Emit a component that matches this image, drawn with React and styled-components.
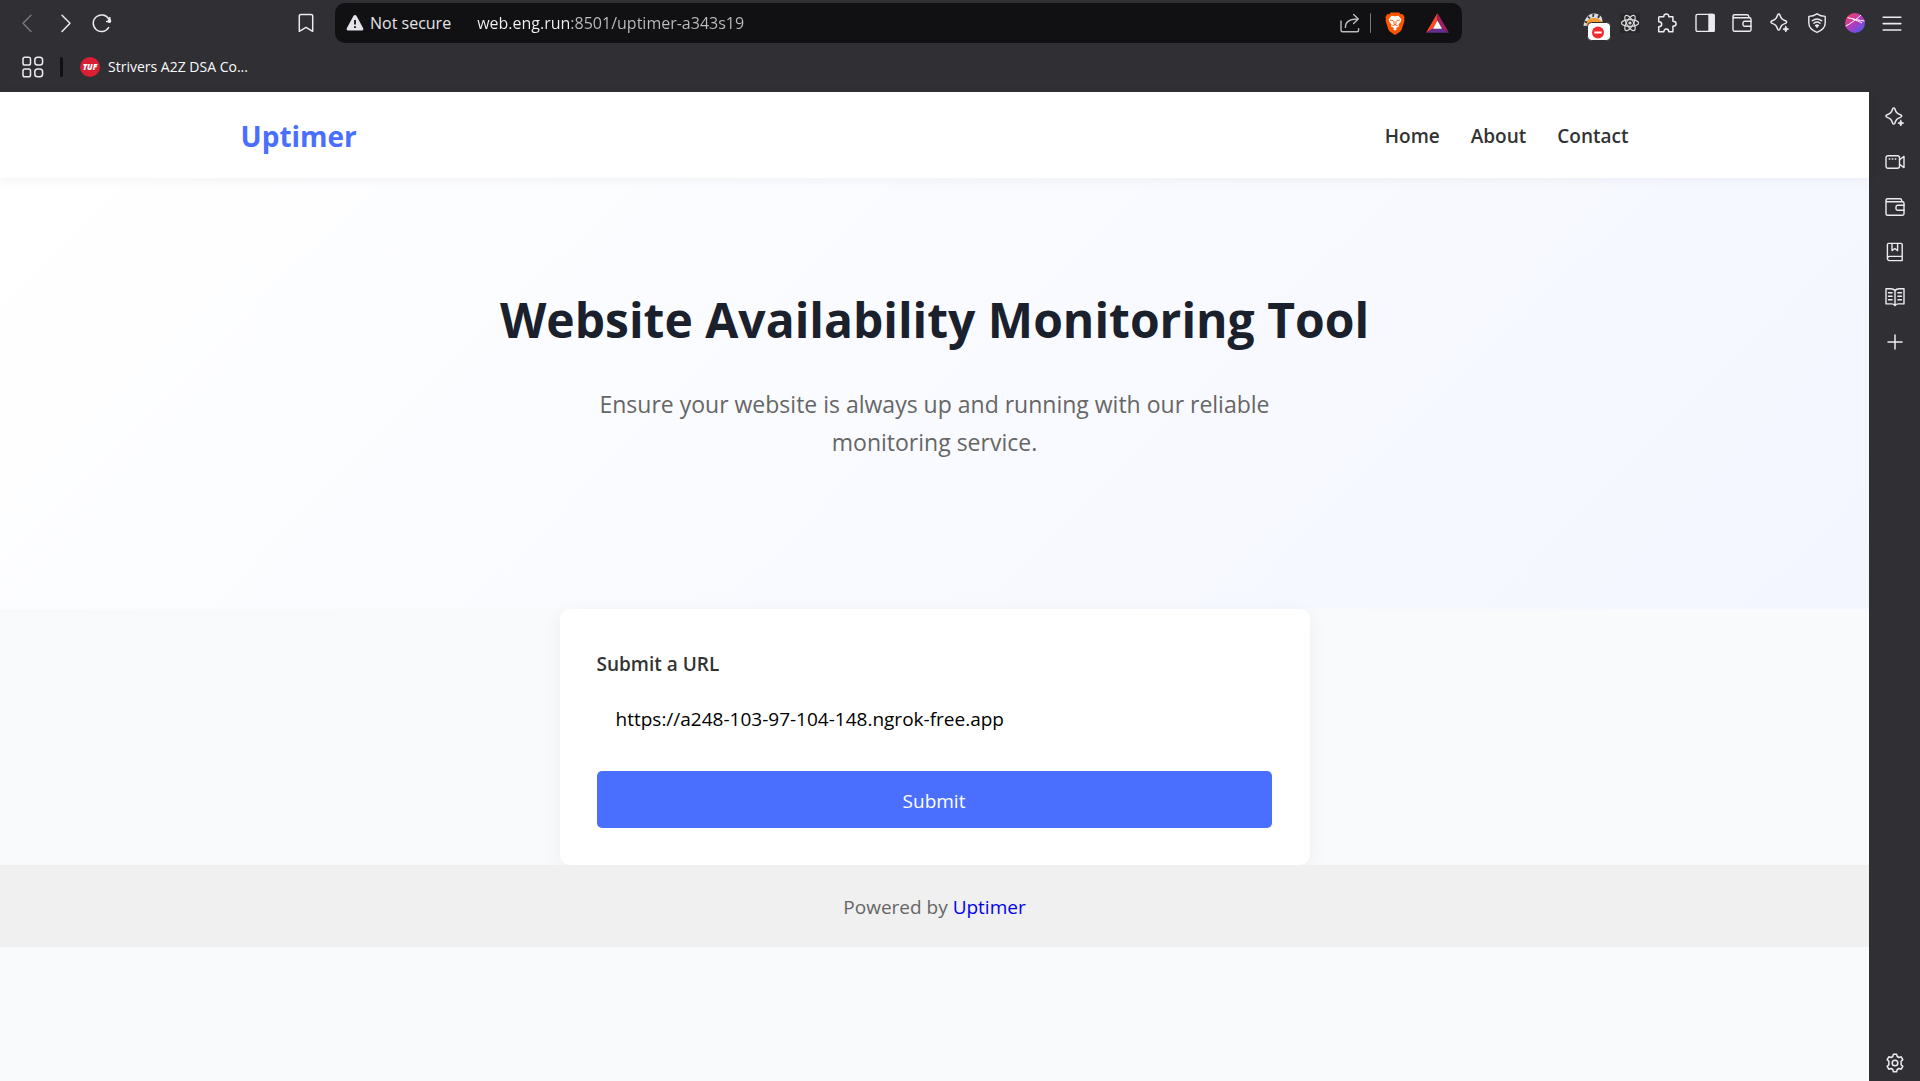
import React, { useState } from "react";
import styled, { createGlobalStyle } from "styled-components";

const GlobalStyle = createGlobalStyle`
  *, *::before, *::after { box-sizing: border-box; }
  body {
    margin: 0;
    font-family: "Open Sans", "Noto Sans", sans-serif;
    background: #f8fafc;
  }
`;

const CHROME = "#302f34";

/* ---------- browser frame ---------- */

const Browser = styled.div`
  display: flex;
  flex-direction: column;
  min-height: 100vh;
`;

const Chrome = styled.div`
  height: 92px;
  flex: none;
  background: ${CHROME};
  color: #f0f0f4;
`;

const Toolbar = styled.div`
  display: grid;
  grid-template-columns: 335px minmax(0, 1127px) 1fr;
  height: 46px;
  align-items: center;
`;

const NavButtons = styled.div`
  display: flex;
  align-items: center;
  gap: 17px;
  padding: 0 19px 0 18px;

  & > :last-child { margin-left: auto; }
`;

const IconButton = styled.button`
  display: grid;
  place-items: center;
  flex: none;
  width: ${(p) => p.$size || 20}px;
  height: ${(p) => p.$height || p.$size || 20}px;
  padding: 0;
  border: 0;
  background: none;
  color: ${(p) => (p.$muted ? "#77767c" : "#ececf0")};
  cursor: pointer;

  svg { display: block; }
`;

const AddressBar = styled.div`
  display: flex;
  align-items: center;
  height: 40px;
  padding: 0 13px 0 11px;
  border-radius: 10px;
  background: #111113;
  font-size: 16px;
`;

const SecurityButton = styled.button`
  display: flex;
  align-items: center;
  gap: 6px;
  padding: 0;
  border: 0;
  background: none;
  color: #e4e3ea;
  font: inherit;
  white-space: nowrap;
`;

const AddressInput = styled.input`
  flex: 1;
  min-width: 0;
  margin-left: 26px;
  padding: 0;
  border: 0;
  outline: 0;
  font: inherit;
  color: #c6c6ca;
  background: linear-gradient(to right, #f4f4f6 94px, #bdbdc2 94px);
  background-clip: text;
  -webkit-background-clip: text;
  -webkit-text-fill-color: transparent;
`;

const AddressActions = styled.div`
  display: flex;
  align-items: center;
`;

const BraveActions = styled.div`
  display: flex;
  align-items: center;
  gap: 20px;
`;

const Divider = styled.span`
  width: ${(p) => p.$width}px;
  height: 20px;
  margin: ${(p) => p.$margin};
  border-radius: 2px;
  background: ${(p) => p.$color};
`;

const Extensions = styled.div`
  display: flex;
  align-items: center;
  justify-content: flex-end;
  gap: 9px;
  padding-right: 18px;
`;

const ExtensionRow = styled.div`
  display: flex;
  justify-content: space-between;
  width: 282px;
`;

const BookmarksBar = styled.div`
  display: flex;
  align-items: center;
  height: 42px;
  padding-left: 22px;
`;

const Bookmark = styled.a`
  display: flex;
  align-items: center;
  gap: 8px;
  color: #fafafc;
  font-size: 14px;
  text-decoration: none;

  span { padding-bottom: 2px; }
`;

const Body = styled.div`
  display: flex;
  flex: 1;
`;

const Sidebar = styled.aside`
  display: flex;
  flex-direction: column;
  align-items: center;
  gap: 25px;
  flex: none;
  width: 51px;
  padding: 15px 0 8px 1px;
  background: ${CHROME};

  & > :last-child { margin-top: auto; }
`;

/* ---------- site ---------- */

const Page = styled.div`
  flex: 1;
  min-width: 0;
  background: #f8fafc;
  color: #333;
  font-size: 19px;
`;

const Header = styled.header`
  position: relative;
  z-index: 1;
  background: #fff;
  box-shadow: 0 2px 12px rgba(0, 0, 0, 0.05);
`;

const HeaderInner = styled.div`
  display: flex;
  align-items: center;
  justify-content: space-between;
  max-width: 1500px;
  height: 86px;
  margin: 0 auto;
  padding: 2px 56px 0;
`;

const Logo = styled.a`
  color: #4a6fff;
  font-size: 28px;
  font-weight: 700;
  text-decoration: none;
`;

const Nav = styled.nav`
  display: flex;
  gap: 31px;
`;

const NavLink = styled.a`
  color: #333;
  font-weight: 600;
  text-decoration: none;
`;

const Hero = styled.section`
  padding: 102px 25px 148px;
  background: linear-gradient(135deg, #ffffff 0%, #f3f6ff 100%);
  text-align: center;
`;

const Title = styled.h1`
  margin: 0 0 25px;
  color: #1a202c;
  font-size: 48px;
  font-weight: 700;
  line-height: 80px;
`;

const Lead = styled.p`
  max-width: 750px;
  margin: 0 auto;
  color: #666;
  font-size: 23px;
  line-height: 38px;
`;

const Card = styled.form`
  display: flex;
  flex-direction: column;
  max-width: 750px;
  margin: 0 auto;
  padding: 37px 38px 37px 37px;
  border-radius: 10px;
  background: #fff;
  box-shadow: 0 4px 20px rgba(0, 0, 0, 0.05);
`;

const Label = styled.label`
  margin-bottom: 10px;
  font-weight: 600;
  line-height: 36px;
`;

const UrlInput = styled.input`
  height: 54px;
  margin-bottom: 25px;
  padding: 0 19px;
  border: 0;
  outline: 0;
  border-radius: 5px;
  background: #fff;
  color: #000;
  font: inherit;
`;

const SubmitButton = styled.button`
  height: 57px;
  padding: 2px 0 0;
  border: 0;
  border-radius: 5px;
  background: #4a6fff;
  color: #fff;
  font: inherit;
  cursor: pointer;
`;

const Footer = styled.footer`
  position: relative;
  padding: 26px 25px 24px;
  background: #f0f0f0;
  color: #666;
  line-height: 32px;
  text-align: center;

  a { color: #0000ee; text-decoration: none; }
`;

/* ---------- icons ---------- */

const Icon = ({ size = 20, box = 20, width = 1.5, children }) => (
  <svg width={size} height={size} viewBox={`0 0 ${box} ${box}`} fill="none" stroke="currentColor"
    strokeWidth={width} strokeLinecap="round" strokeLinejoin="round" aria-hidden="true">
    {children}
  </svg>
);

const BackIcon = () => <Icon><path d="M13 2.2 5 10.2 13 18.5" /></Icon>;
const ForwardIcon = () => <Icon><path d="M7 2.2 15 10.2 7 18.5" /></Icon>;
const ReloadIcon = () => (
  <Icon>
    <path d="M16.6 14.6A8.3 8.3 0 1 1 16.8 6.2" />
    <circle cx="17.4" cy="8" r="1.9" fill="currentColor" stroke="none" />
    <path d="M17.8 4.6V8.400H14.600" />
  </Icon>
);
const BookmarkIcon = () => (
  <Icon><path d="M5 1.4h10a1.7 1.7 0 0 1 1.7 1.7v15.2L10 14.4l-6.7 3.9V3.1A1.7 1.7 0 0 1 5 1.4Z" /></Icon>
);
const WarningIcon = () => (
  <svg width="18" height="18" viewBox="0 0 18 18" aria-hidden="true">
    <path d="M7.4 1.9a1.9 1.9 0 0 1 3.2 0l6.5 12a1.7 1.7 0 0 1-1.5 2.6H2.4a1.7 1.7 0 0 1-1.5-2.6Z" fill="#e4e3ea" />
    <path d="M9 6v4.5M9 12.3v1.6" stroke="#111113" strokeWidth="1.8" />
  </svg>
);
const ShareIcon = () => (
  <Icon width={1.4}>
    <g stroke="#bcbcc0">
      <path d="M1 8v9.2c0 .9.6 1.5 1.5 1.5H17c.9 0 1.6-.6 1.6-1.5v-1.6" />
      <path d="M5.4 14.4C5.4 9.6 8.2 6 18 6M13.6 1.6 18.3 6l-4.7 4.4" />
    </g>
  </Icon>
);
const BraveIcon = () => (
  <svg width="20" height="23" viewBox="0 0 20 23" aria-hidden="true">
    <path d="M6 .6h8l1.8 1.7 2-.1L19.6 5l-.5 2 .4 1.5-2.9 9.2-1.700 2.100L10 22.900l-4.900-3.100-1.700-2.100L.5 8.500.9 7 .4 5l1.800-2.800 2 .1Z" fill="#ff5500" />
    <path d="M10 4.200l3.400-.5 3 3.600-.6 2.500-2.300 2.800.5 2-2 .8L10 17.800l-2-2.400-2-.8.5-2-2.300-2.800-.6-2.500 3-3.600Z" fill="#fff" />
    <path d="M4.900 7.900l3.600 1M15.100 7.900l-3.600 1M8.800 9l.5 3.500h1.400l.5-3.500M7.300 13.900l2.700-1.200 2.700 1.200" fill="none" stroke="#ff5500" strokeWidth=".9" />
    <path d="M8.200 17.200 10 16l1.800 1.200L10 18.800Z" fill="#fff" />
  </svg>
);
const BatIcon = () => (
  <svg width="23" height="20" viewBox="0 0 23 20" aria-hidden="true">
    <path d="M11.500 0 0 19.800l7.200-4.200 4.300-7.800Z" fill="#ff4724" />
    <path d="M11.500 0 23 19.800l-7.200-4.200-4.300-7.800Z" fill="#9e1f63" />
    <path d="M0 19.800h23l-7.200-4.200H7.200Z" fill="#662d91" />
    <path d="M11.500 7.600 16 15.700H7Z" fill="#fff" />
  </svg>
);
const BlockedExtensionIcon = () => (
  <svg width="28" height="36" viewBox="0 -8 28 36" aria-hidden="true">
    <path d="M.5 13C1 6 5 .600 11 .400c4 0 6.500 1.600 8 4.600l.6 5L12 12Z" fill="#d9dadd" />
    <path d="M3 9.500C6 4.500 13 3 19 8.500L18 11 4 13Z" fill="#f29a2e" />
    <path d="M5 3.500l2 2M10.500.8l-.5 3M16.500 2l-1.500 3M1.500 8.500l2.500 1" stroke="#302f34" strokeWidth="1.700" />
    <rect x="4.500" y="9.500" width="23" height="18" rx="4" fill="#fff" stroke="#302f34" />
    <circle cx="15" cy="19.500" r="6" fill="#f02c30" />
    <path d="M11.300 19.500h7.400" stroke="#fff" strokeWidth="2" />
  </svg>
);
const ReactIcon = () => (
  <svg width="20" height="20" viewBox="0 0 20 20" fill="none" stroke="#d8d8dc" strokeWidth="1.200" aria-hidden="true">
    <rect width="20" height="20" fill="#28282a" stroke="none" />
    <ellipse cx="10" cy="10" rx="8.600" ry="3.400" />
    <ellipse cx="10" cy="10" rx="8.600" ry="3.400" transform="rotate(60 10 10)" />
    <ellipse cx="10" cy="10" rx="8.600" ry="3.400" transform="rotate(120 10 10)" />
    <circle cx="10" cy="10" r="1.600" fill="#d8d8dc" stroke="none" />
  </svg>
);
const PuzzleIcon = () => (
  <Icon>
    <path d="M2.500 3.800h4.300C6.600 1.900 7.700.9 9.300.9s2.700 1 2.500 2.900h4.100v4.500c2 0 3.200.9 3.200 2.500s-1.200 2.500-3.200 2.500v5.400h-4.200c0-1.700-.9-2.700-2.400-2.700s-2.400 1-2.400 2.700H1.700v-5c1.900 0 3-1 3-2.500s-1.100-2.500-3-2.500V4.600c0-.5.3-.8.8-.8Z" />
  </Icon>
);
const PanelIcon = () => (
  <Icon width={1.4}>
    <rect x="1" y="1.400" width="18" height="17" rx="1.500" />
    <path d="M14 1.400h4.500a.6.6 0 0 1 .6.600v15.800a.6.6 0 0 1-.6.600H14Z" fill="currentColor" />
  </Icon>
);
const WalletIcon = () => (
  <Icon width={1.4}>
    <path d="M16.800 4.700V3.500A2 2 0 0 0 14.800 1.700H2.500A1.500 1.500 0 0 0 1 3.200v13.600a1.500 1.500 0 0 0 1.500 1.500h15A1.500 1.500 0 0 0 19 16.800V6.200a1.500 1.500 0 0 0-1.500-1.500H2.500A1.500 1.500 0 0 1 1 3.200" />
    <path d="M19 8.300h-6.300a1.700 1.700 0 0 0-1.700 1.700v1.600a1.700 1.700 0 0 0 1.700 1.700H19" />
  </Icon>
);
const SparkleIcon = () => (
  <Icon width={1.5}>
    <path d="M7.700 1.800c.5-1 1.700-1 2.100 0 1.300 3.900 2.200 4.800 6.100 6.200 1 .4 1 1.700 0 2.100-3.900 1.400-4.800 2.300-6.100 6.200-.4 1-1.600 1-2.100 0-1.300-3.900-2.200-4.800-6-6.200-1-.4-1-1.700 0-2.100 3.800-1.400 4.700-2.300 6-6.200Z" />
    <path d="M15.800 13.200l.9 2 2 .9-2 .9-.9 2-.9-2-2-.9 2-.9Z" fill="currentColor" strokeWidth=".8" />
  </Icon>
);
const ShieldWifiIcon = () => (
  <Icon width={1.4}>
    <path d="M10 .8c2.500 1.700 5 2.500 8.200 2.600v6.400c0 4.800-3.400 7.800-8.200 9.500-4.800-1.700-8.200-4.700-8.200-9.500V3.400C5 3.300 7.500 2.500 10 .8Z" />
    <path d="M5.300 7.800c2.900-2.300 6.500-2.300 9.400 0M6.900 10.300c1.900-1.600 4.300-1.600 6.200 0M8.500 12.600c1-.8 2-.8 3 0" />
    <circle cx="10" cy="13.500" r=".5" fill="currentColor" />
  </Icon>
);
const OrbIcon = () => (
  <svg width="20" height="20" viewBox="0 0 20 20" aria-hidden="true">
    <defs>
      <linearGradient id="orb" x1=".15" y1=".1" x2=".85" y2=".95">
        <stop offset="0" stopColor="#ee3f6b" />
        <stop offset=".5" stopColor="#b03bc2" />
        <stop offset="1" stopColor="#4a5be6" />
      </linearGradient>
      <clipPath id="orbClip"><circle cx="10" cy="10" r="10" /></clipPath>
    </defs>
    <circle cx="10" cy="10" r="10" fill="url(#orb)" />
    <path clipPath="url(#orbClip)" d="M0 13.500C5 11 12 6 16.500 1.500M2.500 4.500C8 6 14 7.500 20 8M7 5.500C11 7 14 8.500 17 10" stroke="#fff" strokeWidth="1" fill="none" />
  </svg>
);
const MenuIcon = () => <Icon width={1.6}><path d="M1.200 4.200h17.600M1.200 10.600h17.600M1.200 17h17.600" /></Icon>;
const AppsIcon = () => (
  <Icon size={22} box={22}>
    <rect x="1" y="1.200" width="7.500" height="7.800" rx="1.800" />
    <rect x="12.800" y="1.200" width="7.800" height="7.800" rx="2.800" />
    <rect x="1" y="13" width="7.500" height="7.800" rx="1.800" />
    <rect x="12.800" y="13" width="7.800" height="7.800" rx="2.800" />
  </Icon>
);
const TufIcon = () => (
  <svg width="20" height="20" viewBox="0 0 20 20" aria-hidden="true">
    <circle cx="10" cy="10" r="10" fill="#d81f33" />
    <text x="10" y="13" textAnchor="middle" fill="#fff" fontFamily="Open Sans, sans-serif" fontSize="8"
      fontWeight="800" fontStyle="italic">TUF</text>
  </svg>
);
const CameraIcon = () => (
  <Icon width={1.4}>
    <path d="M3 3.700h9.500a2 2 0 0 1 2 2v8.600a2 2 0 0 1-2 2H3a2 2 0 0 1-2-2V5.700a2 2 0 0 1 2-2Z" />
    <path d="M14.500 7.700 19 4.400v11.200l-4.500-3.300M4.200 7h.6M7.200 7h.6M10.200 7h.6" />
  </Icon>
);
const JournalIcon = () => (
  <Icon width={1.4}>
    <path d="M3.700 1.400h12.200a1.300 1.300 0 0 1 1.300 1.300v11.700H4.500A2 2 0 0 0 2.400 16.500V2.700a1.300 1.300 0 0 1 1.300-1.300ZM2.400 16.500a2 2 0 0 0 2.100 2.100h12.700v-4.200M7 1.400v7.200L9.800 6.500l2.800 2.100V1.400" />
  </Icon>
);
const ReaderIcon = () => (
  <Icon width={1.4}>
    <path d="M10 3.500C8.800 2 7.500 1.700 6 1.700H1v15.200h5.500c1.500 0 2.700.5 3.500 1.700.8-1.200 2-1.700 3.500-1.700H19V1.700h-5c-1.500 0-2.800.3-4 1.800v15" />
    <path d="M3.500 5.700h3.600M3.500 9.200h3.600M3.500 12.700h3.600M12.900 5.700h3.600M12.900 9.200h3.600M12.900 12.700h3.600" />
  </Icon>
);
const PlusIcon = () => <Icon><path d="M10 3v14M3 10h14" /></Icon>;
const GearIcon = () => (
  <Icon width={1.5}>
    <path d="M8.400 1.200h3.200l.6 2.300 1.700 1 2.300-.7 1.600 2.800-1.700 1.700v3.400l1.700 1.700-1.600 2.800-2.300-.7-1.700 1-.6 2.300H8.400l-.6-2.300-1.700-1-2.300.7-1.600-2.800 1.700-1.700V8.300L2.200 6.600l1.600-2.800 2.300.7 1.700-1Z" />
    <circle cx="10" cy="10" r="2.800" />
  </Icon>
);

const EXTENSIONS = [
  ["React Developer Tools", ReactIcon],
  ["Extensions", PuzzleIcon],
  ["Show sidebar", PanelIcon],
  ["Wallet", WalletIcon],
  ["Ask Leo", SparkleIcon],
  ["VPN", ShieldWifiIcon],
  ["Profile", OrbIcon],
  ["Menu", MenuIcon],
];

const SIDEBAR = [
  ["Leo", SparkleIcon],
  ["Talk", CameraIcon],
  ["Wallet", WalletIcon],
  ["Bookmarks", JournalIcon],
  ["Reading list", ReaderIcon],
  ["Add", PlusIcon],
  ["Settings", GearIcon],
];

export default function App() {
  const [address, setAddress] = useState("web.eng.run:8501/uptimer-a343s19");
  const [url, setUrl] = useState("https://a248-103-97-104-148.ngrok-free.app");

  return (
    <Browser>
      <GlobalStyle />
      <Chrome>
        <Toolbar>
          <NavButtons>
            <IconButton aria-label="Back" $muted><BackIcon /></IconButton>
            <IconButton aria-label="Forward"><ForwardIcon /></IconButton>
            <IconButton aria-label="Reload"><ReloadIcon /></IconButton>
            <IconButton aria-label="Bookmark this page"><BookmarkIcon /></IconButton>
          </NavButtons>
          <AddressBar>
            <SecurityButton><WarningIcon />Not secure</SecurityButton>
            <AddressInput aria-label="Address" value={address} onChange={(e) => setAddress(e.target.value)} />
            <AddressActions>
              <IconButton aria-label="Share"><ShareIcon /></IconButton>
              <Divider $width={1} $margin="0 13px 0 10px" $color="#77777b" />
              <BraveActions>
                <IconButton aria-label="Shields" $size={22}><BraveIcon /></IconButton>
                <IconButton aria-label="Rewards" $size={23}><BatIcon /></IconButton>
              </BraveActions>
            </AddressActions>
          </AddressBar>
          <Extensions>
            <IconButton aria-label="Blocked extension" $size={28} $height={36}><BlockedExtensionIcon /></IconButton>
            <ExtensionRow>
              {EXTENSIONS.map(([name, Glyph]) => (
                <IconButton key={name} aria-label={name}><Glyph /></IconButton>
              ))}
            </ExtensionRow>
          </Extensions>
        </Toolbar>
        <BookmarksBar>
          <IconButton aria-label="All bookmarks" $size={22}><AppsIcon /></IconButton>
          <Divider $width={3} $margin="0 17px 0 16px" $color="#111113" />
          <Bookmark href="#bookmark"><TufIcon /><span>Strivers A2Z DSA Co...</span></Bookmark>
        </BookmarksBar>
      </Chrome>
      <Body>
        <Page>
          <Header>
            <HeaderInner>
              <Logo href="#top">Uptimer</Logo>
              <Nav>
                <NavLink href="#home">Home</NavLink>
                <NavLink href="#about">About</NavLink>
                <NavLink href="#contact">Contact</NavLink>
              </Nav>
            </HeaderInner>
          </Header>
          <main>
            <Hero>
              <Title>Website Availability Monitoring Tool</Title>
              <Lead>Ensure your website is always up and running with our reliable monitoring service.</Lead>
            </Hero>
            <Card onSubmit={(e) => e.preventDefault()}>
              <Label htmlFor="url">Submit a URL</Label>
              <UrlInput id="url" type="url" value={url} onChange={(e) => setUrl(e.target.value)} />
              <SubmitButton type="submit">Submit</SubmitButton>
            </Card>
          </main>
          <Footer>
            Powered by <a href="#uptimer">Uptimer</a>
          </Footer>
        </Page>
        <Sidebar>
          {SIDEBAR.map(([name, Glyph]) => (
            <IconButton key={name} aria-label={name}><Glyph /></IconButton>
          ))}
        </Sidebar>
      </Body>
    </Browser>
  );
}
